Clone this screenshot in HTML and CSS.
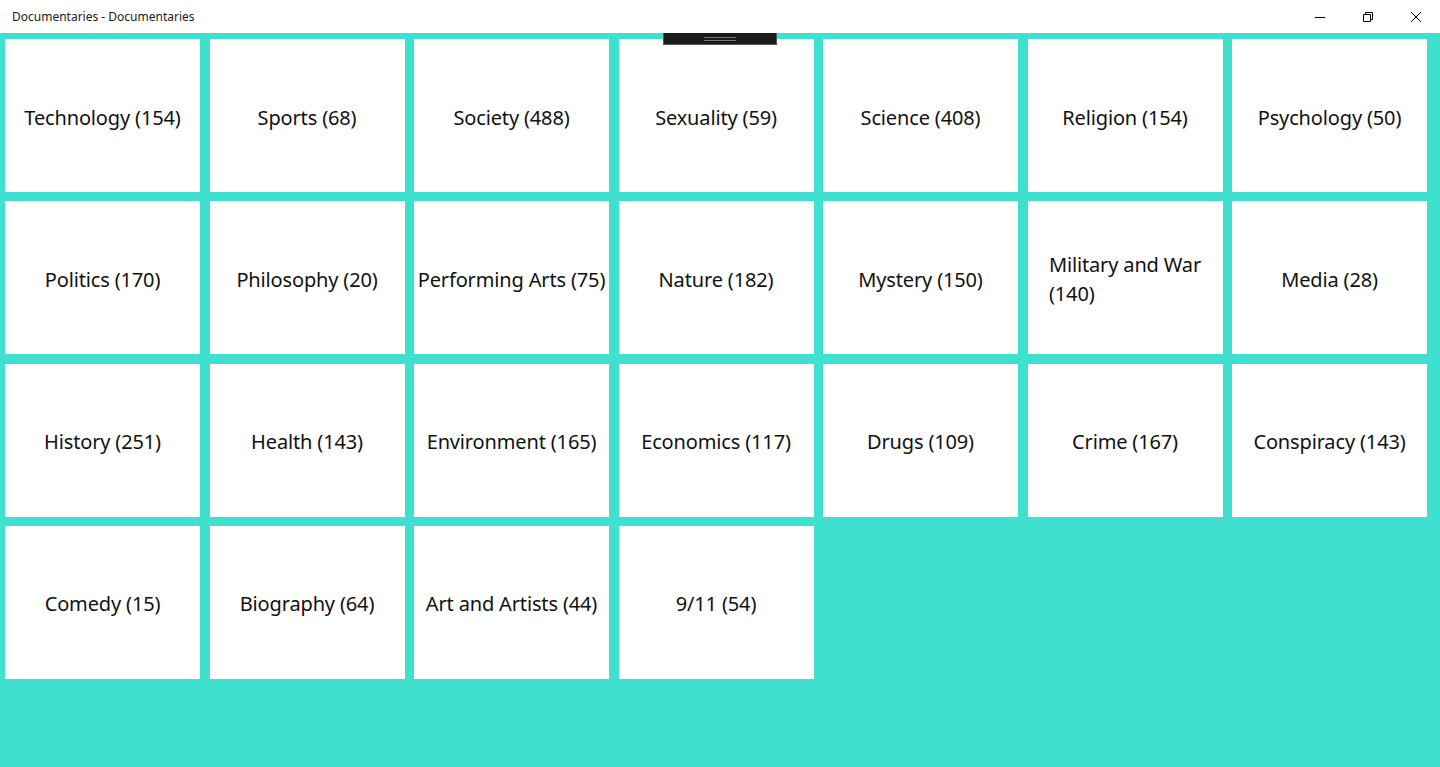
FILE: index.html
```html
<!DOCTYPE html>
<html lang="en">
  <head>
    <meta charset="UTF-8" />
    <meta name="viewport" content="width=device-width, initial-scale=1.0" />
    <title>Documentaries - Documentaries</title>
    <link rel="stylesheet" href="styles.css">
  </head>

  <body>
    <div id="window">
      <div id="titlebar">
        <span id="title">Documentaries - Documentaries</span>
        <div id="controls">
          <div class="control">
            <svg width="12" height="12" viewBox="0 0 12 12">
              <path d="M1 6.5h10" stroke="#000" stroke-width="1" fill="none" />
            </svg>
          </div>
          <div class="control">
            <svg width="12" height="12" viewBox="0 0 12 12">
              <path d="M1.5 3.5h7v7h-7z M3.5 3.5v-2h7v7h-2" stroke="#000" stroke-width="1" fill="none" />
            </svg>
          </div>
          <div class="control">
            <svg width="12" height="12" viewBox="0 0 12 12">
              <path d="M1 1l10 10M11 1l-10 10" stroke="#000" stroke-width="1" fill="none" />
            </svg>
          </div>
        </div>
      </div>

      <div id="content">
        <div id="handle"><span></span></div>
        <div id="tiles">
          <div class="tile"><span>Technology (154)</span></div>
          <div class="tile"><span>Sports (68)</span></div>
          <div class="tile"><span>Society (488)</span></div>
          <div class="tile"><span>Sexuality (59)</span></div>
          <div class="tile"><span>Science (408)</span></div>
          <div class="tile"><span>Religion (154)</span></div>
          <div class="tile"><span>Psychology (50)</span></div>

          <div class="tile"><span>Politics (170)</span></div>
          <div class="tile"><span>Philosophy (20)</span></div>
          <div class="tile"><span>Performing Arts (75)</span></div>
          <div class="tile"><span>Nature (182)</span></div>
          <div class="tile"><span>Mystery (150)</span></div>
          <div class="tile"><span>Military and War<br />(140)</span></div>
          <div class="tile"><span>Media (28)</span></div>

          <div class="tile"><span>History (251)</span></div>
          <div class="tile"><span>Health (143)</span></div>
          <div class="tile"><span>Environment (165)</span></div>
          <div class="tile"><span>Economics (117)</span></div>
          <div class="tile"><span>Drugs (109)</span></div>
          <div class="tile"><span>Crime (167)</span></div>
          <div class="tile"><span>Conspiracy (143)</span></div>

          <div class="tile"><span>Comedy (15)</span></div>
          <div class="tile"><span>Biography (64)</span></div>
          <div class="tile"><span>Art and Artists (44)</span></div>
          <div class="tile"><span>9/11 (54)</span></div>
        </div>
      </div>
    </div>
  </body>
</html>
```

FILE: styles.css
```css
* {
  margin: 0;
  padding: 0;
  box-sizing: border-box;
}
body {
  font-family: "Noto Sans", "Open Sans", sans-serif;
  color: #000;
  background: #fff;
}
#window {
  height: 100vh;
  display: flex;
  flex-direction: column;
}
#titlebar {
  height: 33px;
  display: flex;
  align-items: center;
  justify-content: space-between;
  background: #fff;
}
#title {
  padding-left: 12px;
  font-size: 12px;
  color: #1a1a1a;
}
#controls {
  display: flex;
  height: 100%;
}
.control {
  width: 48px;
  display: flex;
  align-items: center;
  justify-content: center;
}
#content {
  flex: 1;
  position: relative;
  background: #40e0d0;
  padding: 6px 0 0 5px;
}
/* drag handle over the top edge */
#handle {
  position: absolute;
  top: 0;
  left: 663px;
  width: 114px;
  height: 12px;
  background: #1b1b1b;
  border: 1px solid #555;
  border-top: none;
  display: flex;
  align-items: center;
  justify-content: center;
}
#handle span {
  width: 32px;
  height: 4px;
  border-top: 1px solid #777;
  border-bottom: 1px solid #777;
}
#tiles {
  display: grid;
  grid-template-columns: repeat(7, 195px);
  grid-auto-rows: 153px;
  column-gap: 9.5px;
  row-gap: 9.3px;
}
.tile {
  background: #fff;
  display: flex;
  align-items: center;
  justify-content: center;
  padding: 3px 3px 0;
  font-size: 20px;
  letter-spacing: -0.15px;
  line-height: 29px;
  color: #111;
}
.tile span {
  display: inline-block;
}
```
